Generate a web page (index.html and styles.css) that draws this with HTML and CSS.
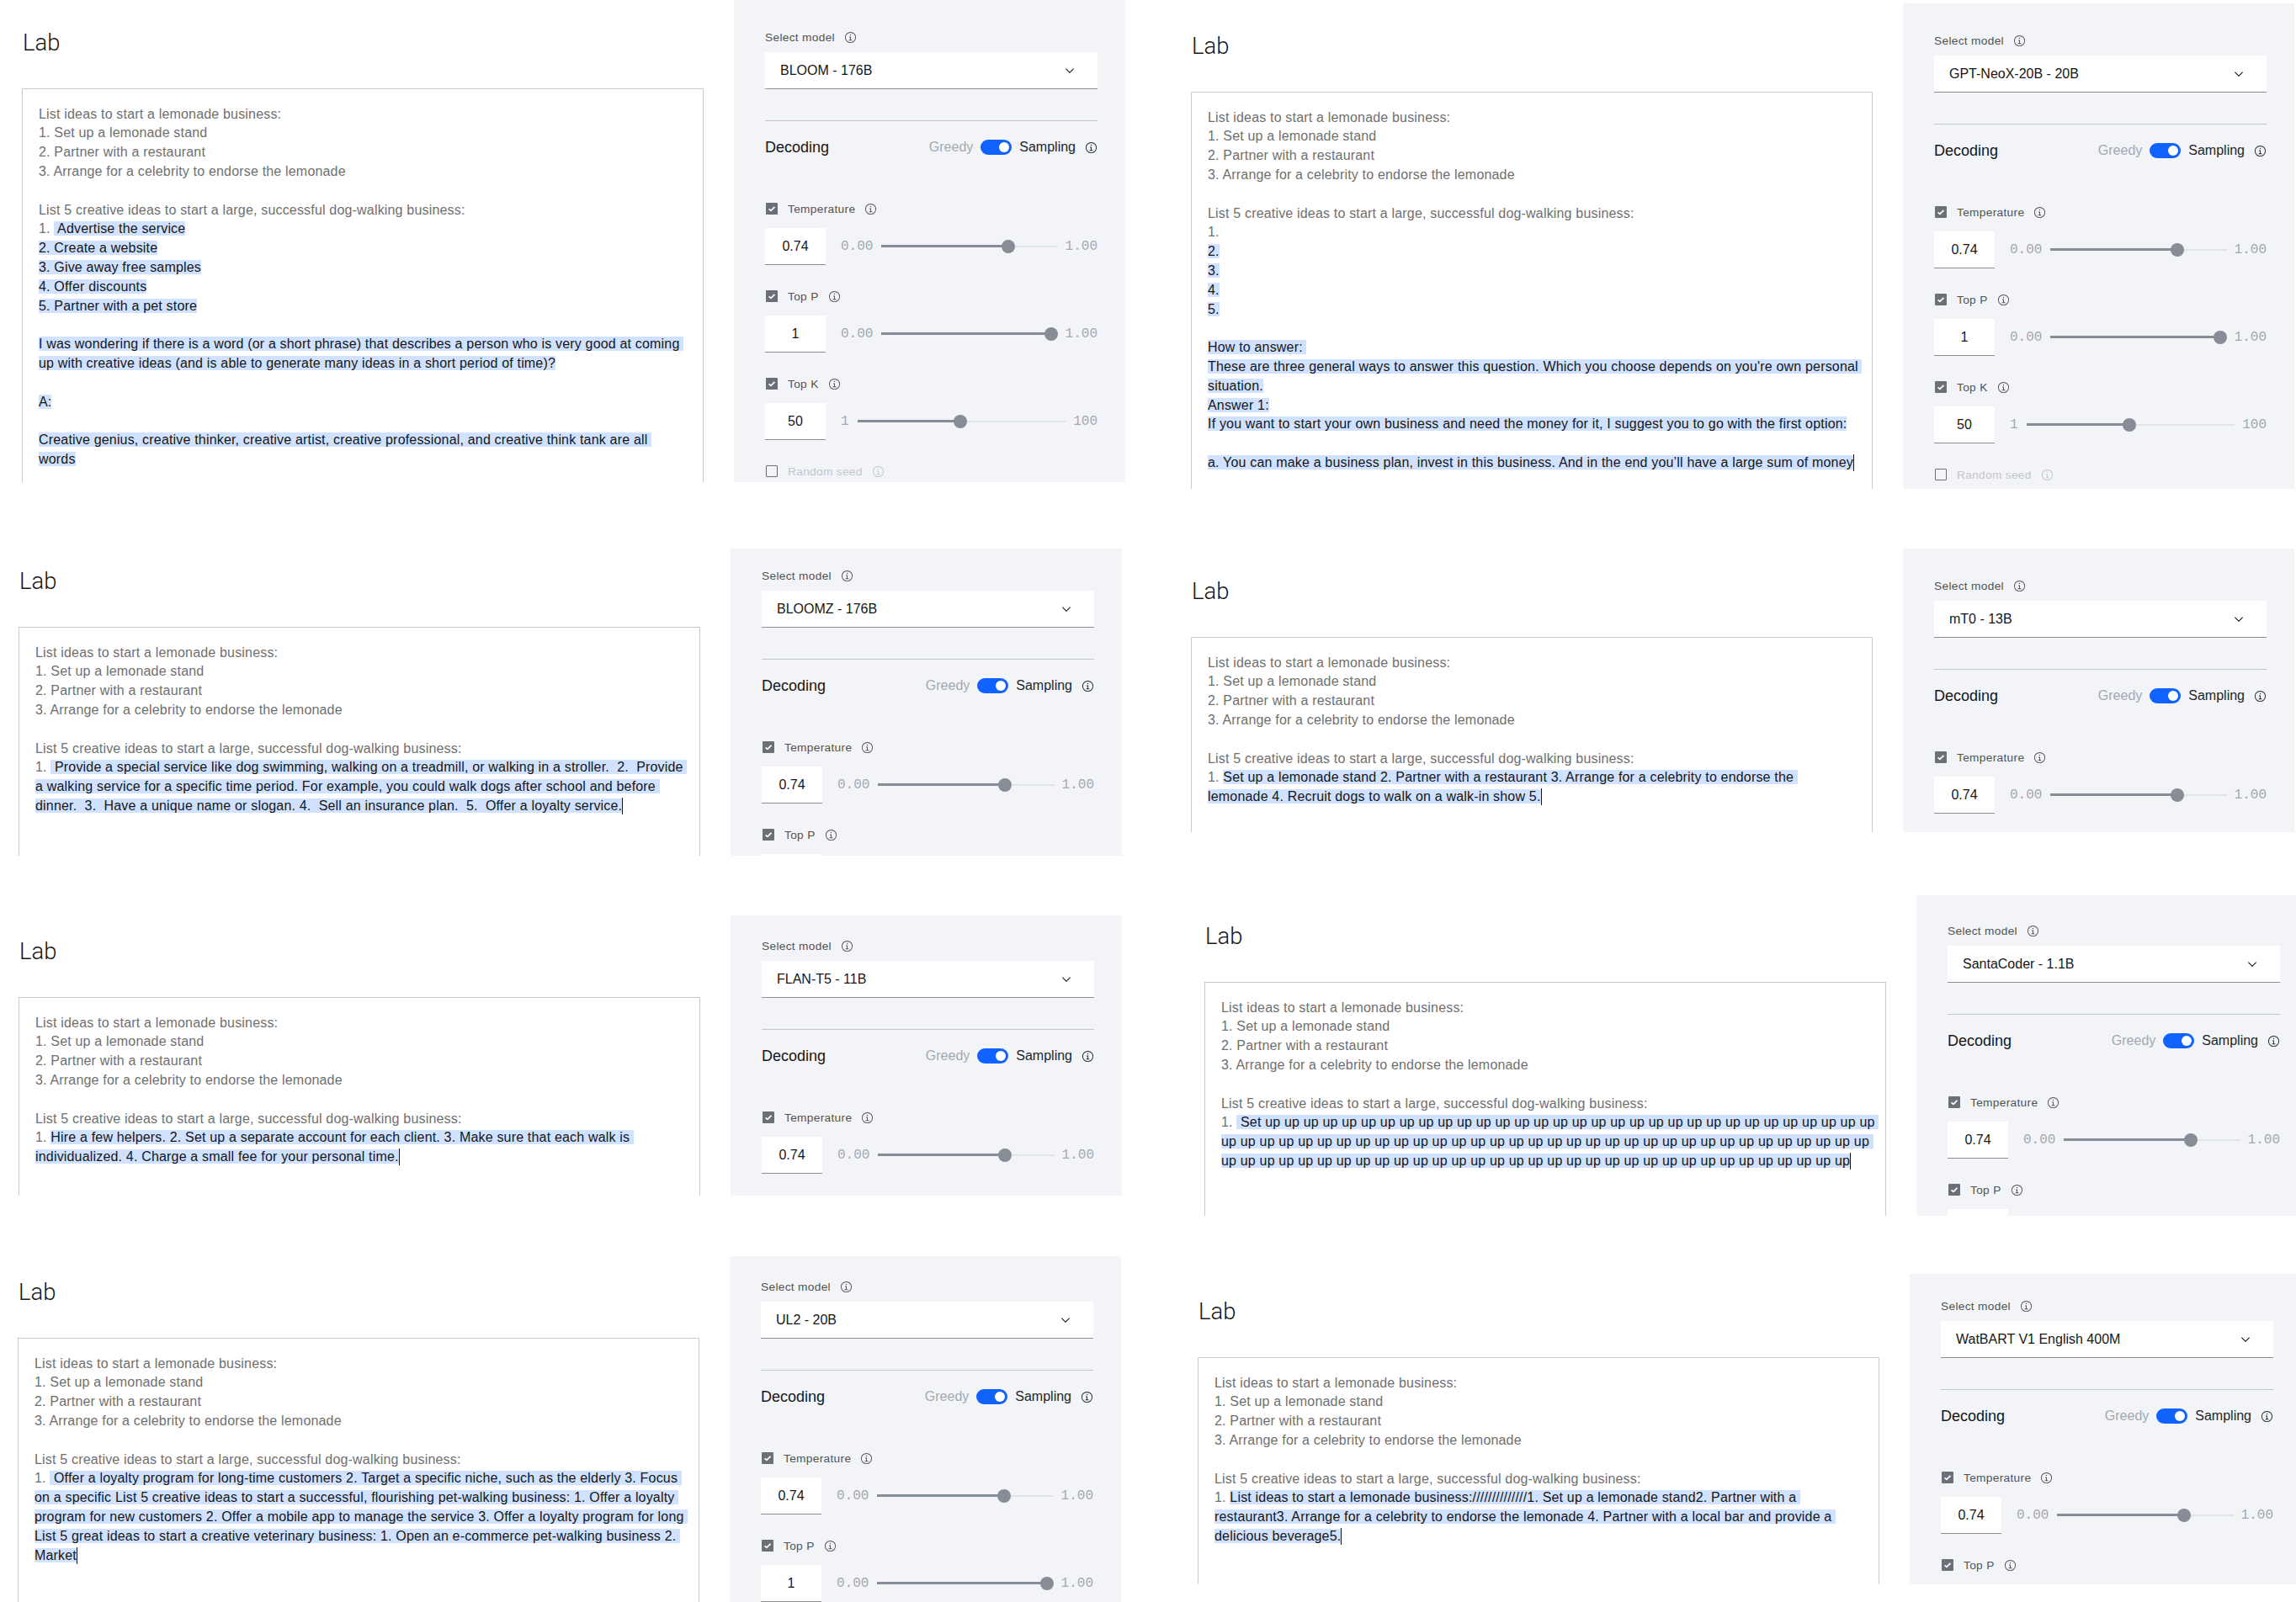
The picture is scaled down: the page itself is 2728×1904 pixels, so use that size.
FILE: index.html
```html
<!DOCTYPE html>
<html lang="en">
<head>
<meta charset="utf-8">
<title>Lab – model comparison</title>
<link rel="stylesheet" href="styles.css">
</head>
<body>
<svg class="defs" aria-hidden="true">
  <symbol id="i-info" viewBox="0 0 32 32"><path d="M17 22v-8h-4v2h2v6h-3v2h8v-2h-3z"/><path d="M16 8a1.5 1.5 0 1 0 1.5 1.5A1.5 1.5 0 0 0 16 8z"/><path d="M16 30a14 14 0 1 1 14-14 14 14 0 0 1-14 14zm0-26a12 12 0 1 0 12 12A12 12 0 0 0 16 4z"/></symbol>
  <symbol id="i-chev" viewBox="0 0 16 16"><path d="M8 11L3 6l.7-.7L8 9.6l4.3-4.3.7.7z"/></symbol>
  <symbol id="i-check" viewBox="0 0 14 14"><path d="M3.6 7.3l2.3 2.1 4.6-4.5" fill="none" stroke="#fff" stroke-width="1.7"/></symbol>
</svg>
<main class="collage">

<!-- 1 -->
<section class="shot p1">
  <div class="work">
    <h1 class="lab">Lab</h1>
    <div class="prompt">
      <div class="ln">List ideas to start a lemonade business:</div>
      <div class="ln">1. Set up a lemonade stand</div>
      <div class="ln">2. Partner with a restaurant</div>
      <div class="ln">3. Arrange for a celebrity to endorse the lemonade</div>
      <div class="ln"></div>
      <div class="ln">List 5 creative ideas to start a large, successful dog-walking business:</div>
      <div class="ln">1. <span class="g"> Advertise the service</span></div>
      <div class="ln"><span class="g">2. Create a website</span></div>
      <div class="ln"><span class="g">3. Give away free samples</span></div>
      <div class="ln"><span class="g">4. Offer discounts</span></div>
      <div class="ln"><span class="g">5. Partner with a pet store</span></div>
      <div class="ln"></div>
      <div class="ln"><span class="g">I was wondering if there is a word (or a short phrase) that describes a person who is very good at coming </span></div>
      <div class="ln"><span class="g">up with creative ideas (and is able to generate many ideas in a short period of time)?</span></div>
      <div class="ln"></div>
      <div class="ln"><span class="g">A:</span></div>
      <div class="ln"></div>
      <div class="ln"><span class="g">Creative genius, creative thinker, creative artist, creative professional, and creative think tank are all </span></div>
      <div class="ln"><span class="g">words</span></div>
    </div>
  </div>
  <aside class="side">
    <div class="lbl">Select model<svg class="info"><use href="#i-info"/></svg></div>
    <div class="dd"><span>BLOOM - 176B</span><svg class="chev"><use href="#i-chev"/></svg></div>
    <div class="rule"></div>
    <div class="dec"><span class="dec-t">Decoding</span><span class="mode"><span class="greedy">Greedy</span><span class="tog"></span><span class="samp">Sampling</span><svg class="info dk"><use href="#i-info"/></svg></span></div>
    <div class="param first">
      <div class="plbl"><span class="cb"><svg><use href="#i-check"/></svg></span>Temperature<svg class="info"><use href="#i-info"/></svg></div>
      <div class="prow"><div class="num">0.74</div><span class="mono">0.00</span><div class="track" style="--v:0.74"><div class="fill"></div><div class="thumb"></div></div><span class="mono">1.00</span></div>
    </div>
    <div class="param">
      <div class="plbl"><span class="cb"><svg><use href="#i-check"/></svg></span>Top P<svg class="info"><use href="#i-info"/></svg></div>
      <div class="prow"><div class="num">1</div><span class="mono">0.00</span><div class="track" style="--v:1"><div class="fill"></div><div class="thumb"></div></div><span class="mono">1.00</span></div>
    </div>
    <div class="param">
      <div class="plbl"><span class="cb"><svg><use href="#i-check"/></svg></span>Top K<svg class="info"><use href="#i-info"/></svg></div>
      <div class="prow"><div class="num">50</div><span class="mono">1</span><div class="track" style="--v:0.495"><div class="fill"></div><div class="thumb"></div></div><span class="mono">100</span></div>
    </div>
    <div class="param off">
      <div class="plbl"><span class="cb"></span>Random seed<svg class="info"><use href="#i-info"/></svg></div>
    </div>
  </aside>
</section>

<!-- 2 -->
<section class="shot p2">
  <div class="work">
    <h1 class="lab">Lab</h1>
    <div class="prompt">
      <div class="ln">List ideas to start a lemonade business:</div>
      <div class="ln">1. Set up a lemonade stand</div>
      <div class="ln">2. Partner with a restaurant</div>
      <div class="ln">3. Arrange for a celebrity to endorse the lemonade</div>
      <div class="ln"></div>
      <div class="ln">List 5 creative ideas to start a large, successful dog-walking business:</div>
      <div class="ln">1.</div>
      <div class="ln"><span class="g">2.</span></div>
      <div class="ln"><span class="g">3.</span></div>
      <div class="ln"><span class="g">4.</span></div>
      <div class="ln"><span class="g">5.</span></div>
      <div class="ln"></div>
      <div class="ln"><span class="g">How to answer: </span></div>
      <div class="ln"><span class="g">These are three general ways to answer this question. Which you choose depends on you're own personal </span></div>
      <div class="ln"><span class="g">situation.</span></div>
      <div class="ln"><span class="g">Answer 1:</span></div>
      <div class="ln"><span class="g">If you want to start your own business and need the money for it, I suggest you to go with the first option:</span></div>
      <div class="ln"></div>
      <div class="ln"><span class="g">a. You can make a business plan, invest in this business. And in the end you’ll have a large sum of money</span><span class="caret"></span></div>
    </div>
  </div>
  <aside class="side">
    <div class="lbl">Select model<svg class="info"><use href="#i-info"/></svg></div>
    <div class="dd"><span>GPT-NeoX-20B - 20B</span><svg class="chev"><use href="#i-chev"/></svg></div>
    <div class="rule"></div>
    <div class="dec"><span class="dec-t">Decoding</span><span class="mode"><span class="greedy">Greedy</span><span class="tog"></span><span class="samp">Sampling</span><svg class="info dk"><use href="#i-info"/></svg></span></div>
    <div class="param first">
      <div class="plbl"><span class="cb"><svg><use href="#i-check"/></svg></span>Temperature<svg class="info"><use href="#i-info"/></svg></div>
      <div class="prow"><div class="num">0.74</div><span class="mono">0.00</span><div class="track" style="--v:0.74"><div class="fill"></div><div class="thumb"></div></div><span class="mono">1.00</span></div>
    </div>
    <div class="param">
      <div class="plbl"><span class="cb"><svg><use href="#i-check"/></svg></span>Top P<svg class="info"><use href="#i-info"/></svg></div>
      <div class="prow"><div class="num">1</div><span class="mono">0.00</span><div class="track" style="--v:1"><div class="fill"></div><div class="thumb"></div></div><span class="mono">1.00</span></div>
    </div>
    <div class="param">
      <div class="plbl"><span class="cb"><svg><use href="#i-check"/></svg></span>Top K<svg class="info"><use href="#i-info"/></svg></div>
      <div class="prow"><div class="num">50</div><span class="mono">1</span><div class="track" style="--v:0.495"><div class="fill"></div><div class="thumb"></div></div><span class="mono">100</span></div>
    </div>
    <div class="param off">
      <div class="plbl"><span class="cb"></span>Random seed<svg class="info"><use href="#i-info"/></svg></div>
    </div>
  </aside>
</section>

<!-- 3 -->
<section class="shot p3">
  <div class="work">
    <h1 class="lab">Lab</h1>
    <div class="prompt">
      <div class="ln">List ideas to start a lemonade business:</div>
      <div class="ln">1. Set up a lemonade stand</div>
      <div class="ln">2. Partner with a restaurant</div>
      <div class="ln">3. Arrange for a celebrity to endorse the lemonade</div>
      <div class="ln"></div>
      <div class="ln">List 5 creative ideas to start a large, successful dog-walking business:</div>
      <div class="ln">1. <span class="g"> Provide a special service like dog swimming, walking on a treadmill, or walking in a stroller.  2.  Provide </span></div>
      <div class="ln"><span class="g">a walking service for a specific time period. For example, you could walk dogs after school and before </span></div>
      <div class="ln"><span class="g">dinner.  3.  Have a unique name or slogan. 4.  Sell an insurance plan.  5.  Offer a loyalty service.</span><span class="caret"></span></div>
    </div>
  </div>
  <aside class="side">
    <div class="lbl">Select model<svg class="info"><use href="#i-info"/></svg></div>
    <div class="dd"><span>BLOOMZ - 176B</span><svg class="chev"><use href="#i-chev"/></svg></div>
    <div class="rule"></div>
    <div class="dec"><span class="dec-t">Decoding</span><span class="mode"><span class="greedy">Greedy</span><span class="tog"></span><span class="samp">Sampling</span><svg class="info dk"><use href="#i-info"/></svg></span></div>
    <div class="param first">
      <div class="plbl"><span class="cb"><svg><use href="#i-check"/></svg></span>Temperature<svg class="info"><use href="#i-info"/></svg></div>
      <div class="prow"><div class="num">0.74</div><span class="mono">0.00</span><div class="track" style="--v:0.74"><div class="fill"></div><div class="thumb"></div></div><span class="mono">1.00</span></div>
    </div>
    <div class="param">
      <div class="plbl"><span class="cb"><svg><use href="#i-check"/></svg></span>Top P<svg class="info"><use href="#i-info"/></svg></div>
      <div class="prow"><div class="num">1</div><span class="mono">0.00</span><div class="track" style="--v:1"><div class="fill"></div><div class="thumb"></div></div><span class="mono">1.00</span></div>
    </div>
  </aside>
</section>

<!-- 4 -->
<section class="shot p4">
  <div class="work">
    <h1 class="lab">Lab</h1>
    <div class="prompt">
      <div class="ln">List ideas to start a lemonade business:</div>
      <div class="ln">1. Set up a lemonade stand</div>
      <div class="ln">2. Partner with a restaurant</div>
      <div class="ln">3. Arrange for a celebrity to endorse the lemonade</div>
      <div class="ln"></div>
      <div class="ln">List 5 creative ideas to start a large, successful dog-walking business:</div>
      <div class="ln">1. <span class="g">Set up a lemonade stand 2. Partner with a restaurant 3. Arrange for a celebrity to endorse the </span></div>
      <div class="ln"><span class="g">lemonade 4. Recruit dogs to walk on a walk-in show 5.</span><span class="caret"></span></div>
    </div>
  </div>
  <aside class="side">
    <div class="lbl">Select model<svg class="info"><use href="#i-info"/></svg></div>
    <div class="dd"><span>mT0 - 13B</span><svg class="chev"><use href="#i-chev"/></svg></div>
    <div class="rule"></div>
    <div class="dec"><span class="dec-t">Decoding</span><span class="mode"><span class="greedy">Greedy</span><span class="tog"></span><span class="samp">Sampling</span><svg class="info dk"><use href="#i-info"/></svg></span></div>
    <div class="param first">
      <div class="plbl"><span class="cb"><svg><use href="#i-check"/></svg></span>Temperature<svg class="info"><use href="#i-info"/></svg></div>
      <div class="prow"><div class="num">0.74</div><span class="mono">0.00</span><div class="track" style="--v:0.74"><div class="fill"></div><div class="thumb"></div></div><span class="mono">1.00</span></div>
    </div>
  </aside>
</section>

<!-- 5 -->
<section class="shot p5">
  <div class="work">
    <h1 class="lab">Lab</h1>
    <div class="prompt">
      <div class="ln">List ideas to start a lemonade business:</div>
      <div class="ln">1. Set up a lemonade stand</div>
      <div class="ln">2. Partner with a restaurant</div>
      <div class="ln">3. Arrange for a celebrity to endorse the lemonade</div>
      <div class="ln"></div>
      <div class="ln">List 5 creative ideas to start a large, successful dog-walking business:</div>
      <div class="ln">1. <span class="g">Hire a few helpers. 2. Set up a separate account for each client. 3. Make sure that each walk is </span></div>
      <div class="ln"><span class="g">individualized. 4. Charge a small fee for your personal time.</span><span class="caret"></span></div>
    </div>
  </div>
  <aside class="side">
    <div class="lbl">Select model<svg class="info"><use href="#i-info"/></svg></div>
    <div class="dd"><span>FLAN-T5 - 11B</span><svg class="chev"><use href="#i-chev"/></svg></div>
    <div class="rule"></div>
    <div class="dec"><span class="dec-t">Decoding</span><span class="mode"><span class="greedy">Greedy</span><span class="tog"></span><span class="samp">Sampling</span><svg class="info dk"><use href="#i-info"/></svg></span></div>
    <div class="param first">
      <div class="plbl"><span class="cb"><svg><use href="#i-check"/></svg></span>Temperature<svg class="info"><use href="#i-info"/></svg></div>
      <div class="prow"><div class="num">0.74</div><span class="mono">0.00</span><div class="track" style="--v:0.74"><div class="fill"></div><div class="thumb"></div></div><span class="mono">1.00</span></div>
    </div>
  </aside>
</section>

<!-- 6 -->
<section class="shot p6">
  <div class="work">
    <h1 class="lab">Lab</h1>
    <div class="prompt">
      <div class="ln">List ideas to start a lemonade business:</div>
      <div class="ln">1. Set up a lemonade stand</div>
      <div class="ln">2. Partner with a restaurant</div>
      <div class="ln">3. Arrange for a celebrity to endorse the lemonade</div>
      <div class="ln"></div>
      <div class="ln">List 5 creative ideas to start a large, successful dog-walking business:</div>
      <div class="ln">1. <span class="g"> Set up up up up up up up up up up up up up up up up up up up up up up up up up up up up up up up up </span></div>
      <div class="ln"><span class="g">up up up up up up up up up up up up up up up up up up up up up up up up up up up up up up up up up up </span></div>
      <div class="ln"><span class="g">up up up up up up up up up up up up up up up up up up up up up up up up up up up up up up up up up</span><span class="caret"></span></div>
    </div>
  </div>
  <aside class="side">
    <div class="lbl">Select model<svg class="info"><use href="#i-info"/></svg></div>
    <div class="dd"><span>SantaCoder - 1.1B</span><svg class="chev"><use href="#i-chev"/></svg></div>
    <div class="rule"></div>
    <div class="dec"><span class="dec-t">Decoding</span><span class="mode"><span class="greedy">Greedy</span><span class="tog"></span><span class="samp">Sampling</span><svg class="info dk"><use href="#i-info"/></svg></span></div>
    <div class="param first">
      <div class="plbl"><span class="cb"><svg><use href="#i-check"/></svg></span>Temperature<svg class="info"><use href="#i-info"/></svg></div>
      <div class="prow"><div class="num">0.74</div><span class="mono">0.00</span><div class="track" style="--v:0.74"><div class="fill"></div><div class="thumb"></div></div><span class="mono">1.00</span></div>
    </div>
    <div class="param">
      <div class="plbl"><span class="cb"><svg><use href="#i-check"/></svg></span>Top P<svg class="info"><use href="#i-info"/></svg></div>
      <div class="prow"><div class="num">1</div><span class="mono">0.00</span><div class="track" style="--v:1"><div class="fill"></div><div class="thumb"></div></div><span class="mono">1.00</span></div>
    </div>
  </aside>
</section>

<!-- 7 -->
<section class="shot p7">
  <div class="work">
    <h1 class="lab">Lab</h1>
    <div class="prompt">
      <div class="ln">List ideas to start a lemonade business:</div>
      <div class="ln">1. Set up a lemonade stand</div>
      <div class="ln">2. Partner with a restaurant</div>
      <div class="ln">3. Arrange for a celebrity to endorse the lemonade</div>
      <div class="ln"></div>
      <div class="ln">List 5 creative ideas to start a large, successful dog-walking business:</div>
      <div class="ln">1. <span class="g"> Offer a loyalty program for long-time customers 2. Target a specific niche, such as the elderly 3. Focus </span></div>
      <div class="ln"><span class="g">on a specific List 5 creative ideas to start a successful, flourishing pet-walking business: 1. Offer a loyalty </span></div>
      <div class="ln"><span class="g">program for new customers 2. Offer a mobile app to manage the service 3. Offer a loyalty program for long </span></div>
      <div class="ln"><span class="g">List 5 great ideas to start a creative veterinary business: 1. Open an e-commerce pet-walking business 2. </span></div>
      <div class="ln"><span class="g">Market</span><span class="caret"></span></div>
    </div>
  </div>
  <aside class="side">
    <div class="lbl">Select model<svg class="info"><use href="#i-info"/></svg></div>
    <div class="dd"><span>UL2 - 20B</span><svg class="chev"><use href="#i-chev"/></svg></div>
    <div class="rule"></div>
    <div class="dec"><span class="dec-t">Decoding</span><span class="mode"><span class="greedy">Greedy</span><span class="tog"></span><span class="samp">Sampling</span><svg class="info dk"><use href="#i-info"/></svg></span></div>
    <div class="param first">
      <div class="plbl"><span class="cb"><svg><use href="#i-check"/></svg></span>Temperature<svg class="info"><use href="#i-info"/></svg></div>
      <div class="prow"><div class="num">0.74</div><span class="mono">0.00</span><div class="track" style="--v:0.74"><div class="fill"></div><div class="thumb"></div></div><span class="mono">1.00</span></div>
    </div>
    <div class="param">
      <div class="plbl"><span class="cb"><svg><use href="#i-check"/></svg></span>Top P<svg class="info"><use href="#i-info"/></svg></div>
      <div class="prow"><div class="num">1</div><span class="mono">0.00</span><div class="track" style="--v:1"><div class="fill"></div><div class="thumb"></div></div><span class="mono">1.00</span></div>
    </div>
  </aside>
</section>

<!-- 8 -->
<section class="shot p8">
  <div class="work">
    <h1 class="lab">Lab</h1>
    <div class="prompt">
      <div class="ln">List ideas to start a lemonade business:</div>
      <div class="ln">1. Set up a lemonade stand</div>
      <div class="ln">2. Partner with a restaurant</div>
      <div class="ln">3. Arrange for a celebrity to endorse the lemonade</div>
      <div class="ln"></div>
      <div class="ln">List 5 creative ideas to start a large, successful dog-walking business:</div>
      <div class="ln">1. <span class="g">List ideas to start a lemonade business://////////////1. Set up a lemonade stand2. Partner with a </span></div>
      <div class="ln"><span class="g">restaurant3. Arrange for a celebrity to endorse the lemonade 4. Partner with a local bar and provide a </span></div>
      <div class="ln"><span class="g">delicious beverage5.</span><span class="caret"></span></div>
    </div>
  </div>
  <aside class="side">
    <div class="lbl">Select model<svg class="info"><use href="#i-info"/></svg></div>
    <div class="dd"><span>WatBART V1 English 400M</span><svg class="chev"><use href="#i-chev"/></svg></div>
    <div class="rule"></div>
    <div class="dec"><span class="dec-t">Decoding</span><span class="mode"><span class="greedy">Greedy</span><span class="tog"></span><span class="samp">Sampling</span><svg class="info dk"><use href="#i-info"/></svg></span></div>
    <div class="param first">
      <div class="plbl"><span class="cb"><svg><use href="#i-check"/></svg></span>Temperature<svg class="info"><use href="#i-info"/></svg></div>
      <div class="prow"><div class="num">0.74</div><span class="mono">0.00</span><div class="track" style="--v:0.74"><div class="fill"></div><div class="thumb"></div></div><span class="mono">1.00</span></div>
    </div>
    <div class="param">
      <div class="plbl"><span class="cb"><svg><use href="#i-check"/></svg></span>Top P<svg class="info"><use href="#i-info"/></svg></div>
      <div class="prow"><div class="num">1</div><span class="mono">0.00</span><div class="track" style="--v:1"><div class="fill"></div><div class="thumb"></div></div><span class="mono">1.00</span></div>
    </div>
  </aside>
</section>

</main>
</body>
</html>
```

FILE: styles.css
```css
html, body {
  margin: 0;
  padding: 0;
  background: #ffffff;
}
body {
  width: 2728px;
  height: 1904px;
  overflow: hidden;
  font-family: "Liberation Sans", Arial, sans-serif;
  color: #161616;
}
.defs {
  position: absolute;
  width: 0;
  height: 0;
  overflow: hidden;
}

/* collage of eight screenshots */
.collage {
  display: grid;
  grid-template-columns: 1360px 1368px;
  grid-template-rows: 652px 412px 429px 411px;
}
.shot {
  display: flex;
  align-items: flex-start;
  overflow: hidden;
  align-self: start;
  max-width: 100%;
  box-sizing: border-box;
  background: #ffffff;
}
.p1 { margin-top: 0;    height: 573px; padding-left: 26px; --s: 44px; }
.p2 { margin-top: 4px;  height: 577px; padding-left: 55px; --s: 44px; }
.p3 { margin-top: 0;    height: 365px; padding-left: 22px; --s: 32px; }
.p4 { margin-top: 0;    height: 337px; padding-left: 55px; --s: 44px; }
.p5 { margin-top: 24px; height: 333px; padding-left: 22px; --s: 36px; }
.p6 { margin-top: 0;    height: 381px; padding-left: 71px; --s: 42px; }
.p7 { margin-top: 0;    height: 411px; padding-left: 21px; --s: 36px; }
.p8 { margin-top: 21px; height: 369px; padding-left: 63px; --s: 38px; }

/* left work area */
.work {
  flex: none;
  width: 810px;
  margin-top: calc(var(--s) - 7px);
}
.lab {
  margin: 0 0 40px 1px;
  font-family: Roboto, "Liberation Sans", sans-serif;
  font-weight: 300;
  font-size: 27.4px;
  line-height: 28px;
  color: #161616;
}
.prompt {
  box-sizing: border-box;
  height: 1000px;
  border: 1px solid #c6c9ce;
  padding: 18.6px 19px;
  font-size: 16px;
  line-height: 22.8px;
  letter-spacing: 0.18px;
  color: #6f6f6f;
}
.ln {
  height: 22.8px;
  white-space: pre;
}
.g {
  background: #d0e2ff;
  color: #161616;
}
.caret {
  display: inline-block;
  width: 1px;
  height: 20px;
  background: #161616;
  vertical-align: -5px;
}

/* right settings panel */
.side {
  flex: none;
  align-self: stretch;
  width: 465px;
  margin-left: 36px;
  box-sizing: border-box;
  padding: calc(var(--s) - 9px) 33px 0 37px;
  background: #f2f4f8;
}
.info {
  flex: none;
  width: 15px;
  height: 15px;
  fill: currentColor;
}
.lbl {
  display: flex;
  align-items: center;
  height: 18px;
  font-size: 13.7px;
  letter-spacing: 0.32px;
  color: #525252;
}
.lbl .info {
  margin-left: 11px;
}
.dd {
  box-sizing: border-box;
  height: 44px;
  margin-top: 9px;
  padding: 0 25px 0 18px;
  display: flex;
  align-items: center;
  justify-content: space-between;
  background: #ffffff;
  border-bottom: 1px solid #8d8d8d;
  font-size: 16px;
  color: #161616;
}
.chev {
  width: 16px;
  height: 16px;
  fill: #161616;
}
.rule {
  height: 1px;
  margin-top: 37px;
  background: #c1c7cd;
}
.dec {
  height: 20px;
  margin-top: 21px;
  display: flex;
  align-items: center;
  justify-content: space-between;
}
.dec-t {
  font-size: 18px;
  color: #161616;
}
.mode {
  display: flex;
  align-items: center;
  font-size: 16px;
}
.greedy {
  color: #a2a9b0;
  margin-right: 9px;
}
.tog {
  position: relative;
  width: 37px;
  height: 18px;
  border-radius: 9px;
  background: #0f62fe;
  margin-right: 9px;
}
.tog::after {
  content: "";
  position: absolute;
  right: 3px;
  top: 3px;
  width: 12px;
  height: 12px;
  border-radius: 50%;
  background: #ffffff;
}
.samp {
  color: #21272a;
  margin-right: 11px;
}
.info.dk {
  color: #21272a;
}
.param {
  margin-top: 28px;
}
.param.first {
  margin-top: 54px;
}
.plbl {
  display: flex;
  align-items: center;
  height: 18px;
  font-size: 13.7px;
  letter-spacing: 0.32px;
  color: #525252;
}
.plbl .info {
  margin-left: 11px;
}
.cb {
  flex: none;
  box-sizing: border-box;
  width: 14px;
  height: 14px;
  margin: 0 12px 0 1px;
  border-radius: 1px;
  background: #697077;
  display: flex;
  align-items: center;
  justify-content: center;
}
.cb svg {
  width: 14px;
  height: 14px;
}
.param.off .plbl {
  color: #c1c7cd;
}
.param.off .cb {
  background: transparent;
  border: 1px solid #6f6f6f;
}
.prow {
  display: flex;
  align-items: center;
  height: 44px;
  margin-top: 14px;
}
.num {
  flex: none;
  box-sizing: border-box;
  width: 72px;
  height: 44px;
  margin-right: 18px;
  display: flex;
  align-items: center;
  justify-content: center;
  background: #ffffff;
  border-bottom: 1px solid #8d8d8d;
  font-size: 16px;
  color: #161616;
}
.mono {
  font-family: "Liberation Mono", "DejaVu Sans Mono", monospace;
  font-size: 16px;
  color: #a2a9b0;
}
.track {
  position: relative;
  flex: 1;
  height: 2px;
  margin: 0 9px 0 10px;
  background: #e0e3e7;
}
.fill {
  position: absolute;
  left: 0;
  top: -1px;
  height: 3px;
  width: calc(var(--v) * (100% - 16px) + 8px);
  background: #878d96;
}
.thumb {
  position: absolute;
  top: 50%;
  left: calc(var(--v) * (100% - 16px));
  width: 16px;
  height: 16px;
  margin-top: -8px;
  border-radius: 50%;
  background: #878d96;
}
```
